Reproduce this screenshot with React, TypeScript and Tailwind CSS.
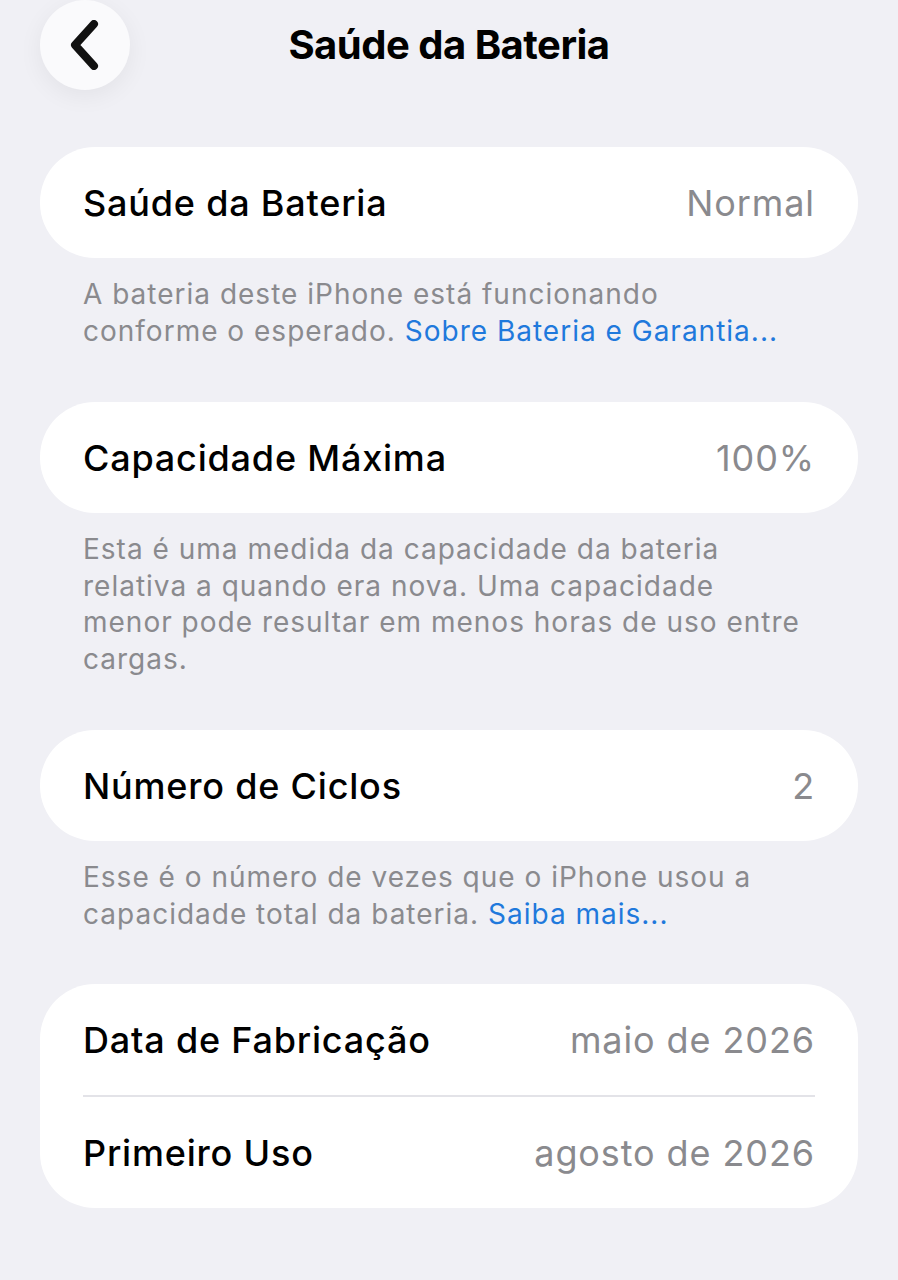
import React from "react";

const FONT = { fontFamily: "Inter, 'Noto Sans', sans-serif" };

function Row({ label, value }: { label: string; value: string }) {
  return (
    <div className="flex h-[111px] items-center justify-between px-[43px]">
      <span className="whitespace-nowrap text-[36px] font-medium tracking-[0.8px] text-black">{label}</span>
      <span className="whitespace-nowrap text-[36px] tracking-[0.9px] text-[#8a8a8e]">{value}</span>
    </div>
  );
}

function Card({ children }: { children: React.ReactNode }) {
  return <div className="mx-[40px] rounded-[55px] bg-white">{children}</div>;
}

function Footer({ children }: { children: React.ReactNode }) {
  return (
    <p className="ml-[83px] mt-[18px] whitespace-nowrap text-[28px] leading-[36.5px] tracking-[1px] text-[#8a8a8e]">
      {children}
    </p>
  );
}

function Link({ children }: { children: React.ReactNode }) {
  return <span className="text-[#1f79dc]">{children}</span>;
}

export default function App() {
  return (
    <div className="min-h-[1280px] w-[898px] bg-[#f0f0f5]" style={FONT}>
      <header className="relative flex h-[90px] items-center justify-center">
        <button className="absolute left-[40px] top-0 flex h-[90px] w-[90px] items-center justify-center rounded-full bg-[#fafafc] shadow-[0_6px_24px_rgba(0,0,0,0.06)]">
          <svg width="34" height="50" viewBox="0 0 34 50" fill="none">
            <path
              d="M26 4 L7 25 L26 46"
              stroke="#111"
              strokeWidth="8"
              strokeLinecap="round"
              strokeLinejoin="round"
            />
          </svg>
        </button>
        <h1 className="text-[40px] font-bold tracking-[-0.5px] text-black">Saúde da Bateria</h1>
      </header>

      <div className="mt-[57px]">
        <Card>
          <Row label="Saúde da Bateria" value="Normal" />
        </Card>
        <Footer>
          A bateria deste iPhone está funcionando
          <br />
          conforme o esperado. <Link>Sobre Bateria e Garantia...</Link>
        </Footer>
      </div>

      <div className="mt-[53px]">
        <Card>
          <Row label="Capacidade Máxima" value="100%" />
        </Card>
        <Footer>
          Esta é uma medida da capacidade da bateria
          <br />
          relativa a quando era nova. Uma capacidade
          <br />
          menor pode resultar em menos horas de uso entre
          <br />
          cargas.
        </Footer>
      </div>

      <div className="mt-[53px]">
        <Card>
          <Row label="Número de Ciclos" value="2" />
        </Card>
        <Footer>
          Esse é o número de vezes que o iPhone usou a
          <br />
          capacidade total da bateria. <Link>Saiba mais...</Link>
        </Footer>
      </div>

      <div className="mt-[52px]">
        <Card>
          <Row label="Data de Fabricação" value="maio de 2026" />
          <div className="mx-[43px] h-[2px] bg-[#e3e3e8]" />
          <Row label="Primeiro Uso" value="agosto de 2026" />
        </Card>
      </div>
    </div>
  );
}
